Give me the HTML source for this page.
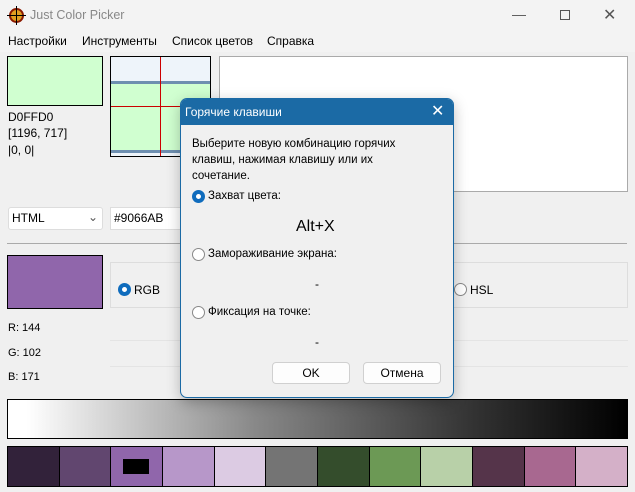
<!DOCTYPE html>
<html><head><meta charset="utf-8"><style>
*{margin:0;padding:0;box-sizing:border-box}
body{width:635px;height:492px;overflow:hidden;background:#f0f0f0;font-family:"Liberation Sans","Noto Sans CJK SC",sans-serif;font-size:12px;color:#000;position:relative}
.a{position:absolute}
.t{position:absolute;white-space:nowrap}
.radio{position:absolute;width:13px;height:13px;border-radius:50%;border:1px solid #888;background:#fff}
.radio.on{border:4px solid #0f6cbd;background:#fff}
.btn{position:absolute;height:22px;background:#fdfdfd;border:1px solid #d0d0d0;border-radius:4px;text-align:center;line-height:20px}
</style></head><body>
<div class="a" style="left:0;top:0;width:635px;height:30px;background:#f3f3f3"></div>
<div class="a" style="left:9px;top:8px;width:15px;height:15px;border-radius:50%;background:#e0a020;border:2px solid #8b1a00"></div>
<div class="a" style="left:16px;top:6px;width:1px;height:19px;background:#000"></div>
<div class="a" style="left:7px;top:15px;width:19px;height:1px;background:#000"></div>
<div class="t" style="left:30px;top:8px;color:#888;font-size:12.5px">Just Color Picker</div>
<div class="t" style="left:512px;top:6px;color:#555;font-size:14px">—</div>
<div class="a" style="left:560px;top:10px;width:10px;height:10px;border:1px solid #555"></div>
<div class="t" style="left:603px;top:5px;color:#555;font-size:16px">✕</div>
<div class="a" style="left:0;top:30px;width:635px;height:22px;background:#f3f3f3"></div>
<div class="t" style="left:8px;top:34px;font-size:12px">Настройки</div>
<div class="t" style="left:82px;top:34px;font-size:12px">Инструменты</div>
<div class="t" style="left:172px;top:34px;font-size:12px">Список цветов</div>
<div class="t" style="left:267px;top:34px;font-size:12px">Справка</div>

<div class="a" style="left:7px;top:56px;width:96px;height:50px;background:#d0ffd0;border:1px solid #000"></div>
<div class="a" style="left:110px;top:56px;width:101px;height:101px;background:#d0ffd0;border:1px solid #000"></div>
<div class="a" style="left:111px;top:57px;width:99px;height:24px;background:#eef4fa"></div>
<div class="a" style="left:111px;top:81px;width:99px;height:3px;background:#6e8fb0"></div>
<div class="a" style="left:111px;top:150px;width:99px;height:3px;background:#6e8fb0"></div>
<div class="a" style="left:111px;top:153px;width:99px;height:3px;background:#eef4fa"></div>
<div class="a" style="left:160px;top:57px;width:1px;height:99px;background:#c00"></div>
<div class="a" style="left:111px;top:106px;width:99px;height:1px;background:#c00"></div>
<div class="a" style="left:219px;top:56px;width:409px;height:136px;background:#fff;border:1px solid #aaa"></div>
<div class="t" style="left:8px;top:110px">D0FFD0</div>
<div class="t" style="left:8px;top:126px">[1196, 717]</div>
<div class="t" style="left:8px;top:143px">|0, 0|</div>
<div class="a" style="left:8px;top:207px;width:95px;height:23px;background:#fff;border:1px solid #ddd;border-radius:3px"></div>
<div class="t" style="left:12px;top:211px">HTML</div>
<div class="t" style="left:88px;top:210px;color:#555">⌄</div>
<div class="a" style="left:110px;top:207px;width:100px;height:23px;background:#fff;border:1px solid #ddd"></div>
<div class="t" style="left:114px;top:211px">#9066AB</div>
<div class="a" style="left:7px;top:243px;width:620px;height:1px;background:#aaa"></div>
<div class="a" style="left:7px;top:255px;width:96px;height:54px;background:#9066ab;border:1px solid #000"></div>
<div class="a" style="left:110px;top:262px;width:518px;height:46px;background:#f0f0f0;border:1px solid #ddd"></div>
<div class="radio on" style="left:118px;top:283px"></div>
<div class="t" style="left:134px;top:283px">RGB</div>
<div class="radio" style="left:454px;top:283px"></div>
<div class="t" style="left:470px;top:283px">HSL</div>
<div class="a" style="left:110px;top:340px;width:518px;height:1px;background:#e4e4e4"></div>
<div class="a" style="left:110px;top:366px;width:518px;height:1px;background:#e4e4e4"></div>
<div class="t" style="left:8px;top:322px;font-size:11px">R: 144</div>
<div class="t" style="left:8px;top:347px;font-size:11px">G: 102</div>
<div class="t" style="left:8px;top:371px;font-size:11px">B: 171</div>
<div class="a" style="left:7px;top:399px;width:621px;height:40px;border:1px solid #000;background:linear-gradient(to right,#fff 3%,#888 40%,#333 75%,#000)"></div>
<div class="a" style="left:7px;top:446px;width:621px;height:41px;border:1px solid #000;display:flex;background:#000">
<div style="flex:1;background:#32223a;margin-right:1px"></div>
<div style="flex:1;background:#61466f;margin-right:1px"></div>
<div style="flex:1;background:#9066ab;margin-right:1px;position:relative"><div class="a" style="left:12px;top:12px;width:26px;height:15px;background:#000"></div></div>
<div style="flex:1;background:#b797c9;margin-right:1px"></div>
<div style="flex:1;background:#dccbe3;margin-right:1px"></div>
<div style="flex:1;background:#747474;margin-right:1px"></div>
<div style="flex:1;background:#344d2c;margin-right:1px"></div>
<div style="flex:1;background:#6c9955;margin-right:1px"></div>
<div style="flex:1;background:#b8d0a8;margin-right:1px"></div>
<div style="flex:1;background:#55344a;margin-right:1px"></div>
<div style="flex:1;background:#a86890;margin-right:1px"></div>
<div style="flex:1;background:#d4b0c8"></div>
</div>

<div class="a" style="left:180px;top:98px;width:274px;height:300px;background:#f0f0f0;border:1px solid #1b6aa5;border-radius:7px;overflow:hidden;box-shadow:0 4px 14px rgba(0,0,0,.25)">
<div class="a" style="left:0;top:0;width:274px;height:26px;background:#1b6aa5"></div>
<div class="t" style="left:4px;top:6px;color:#fff;font-size:12px">Горячие клавиши</div>
<div class="t" style="left:250px;top:2px;color:#fff;font-size:16px">✕</div>
<div class="t" style="left:11px;top:37px;line-height:16px;font-size:11.5px">Выберите новую комбинацию горячих<br>клавиш, нажимая клавишу или их<br>сочетание.</div>
<div class="radio on" style="left:11px;top:91px"></div>
<div class="t" style="left:27px;top:91px;font-size:11.5px">Захват цвета:</div>
<div class="t" style="left:115px;top:119px;font-size:16px">Alt+X</div>
<div class="radio" style="left:11px;top:149px"></div>
<div class="t" style="left:27px;top:149px;font-size:11.5px">Замораживание экрана:</div>
<div class="t" style="left:134px;top:178px">-</div>
<div class="radio" style="left:11px;top:207px"></div>
<div class="t" style="left:27px;top:207px;font-size:11.5px">Фиксация на точке:</div>
<div class="t" style="left:134px;top:236px">-</div>
<div class="btn" style="left:91px;top:263px;width:78px">OK</div>
<div class="btn" style="left:182px;top:263px;width:78px">Отмена</div>
</div>
</body></html>
